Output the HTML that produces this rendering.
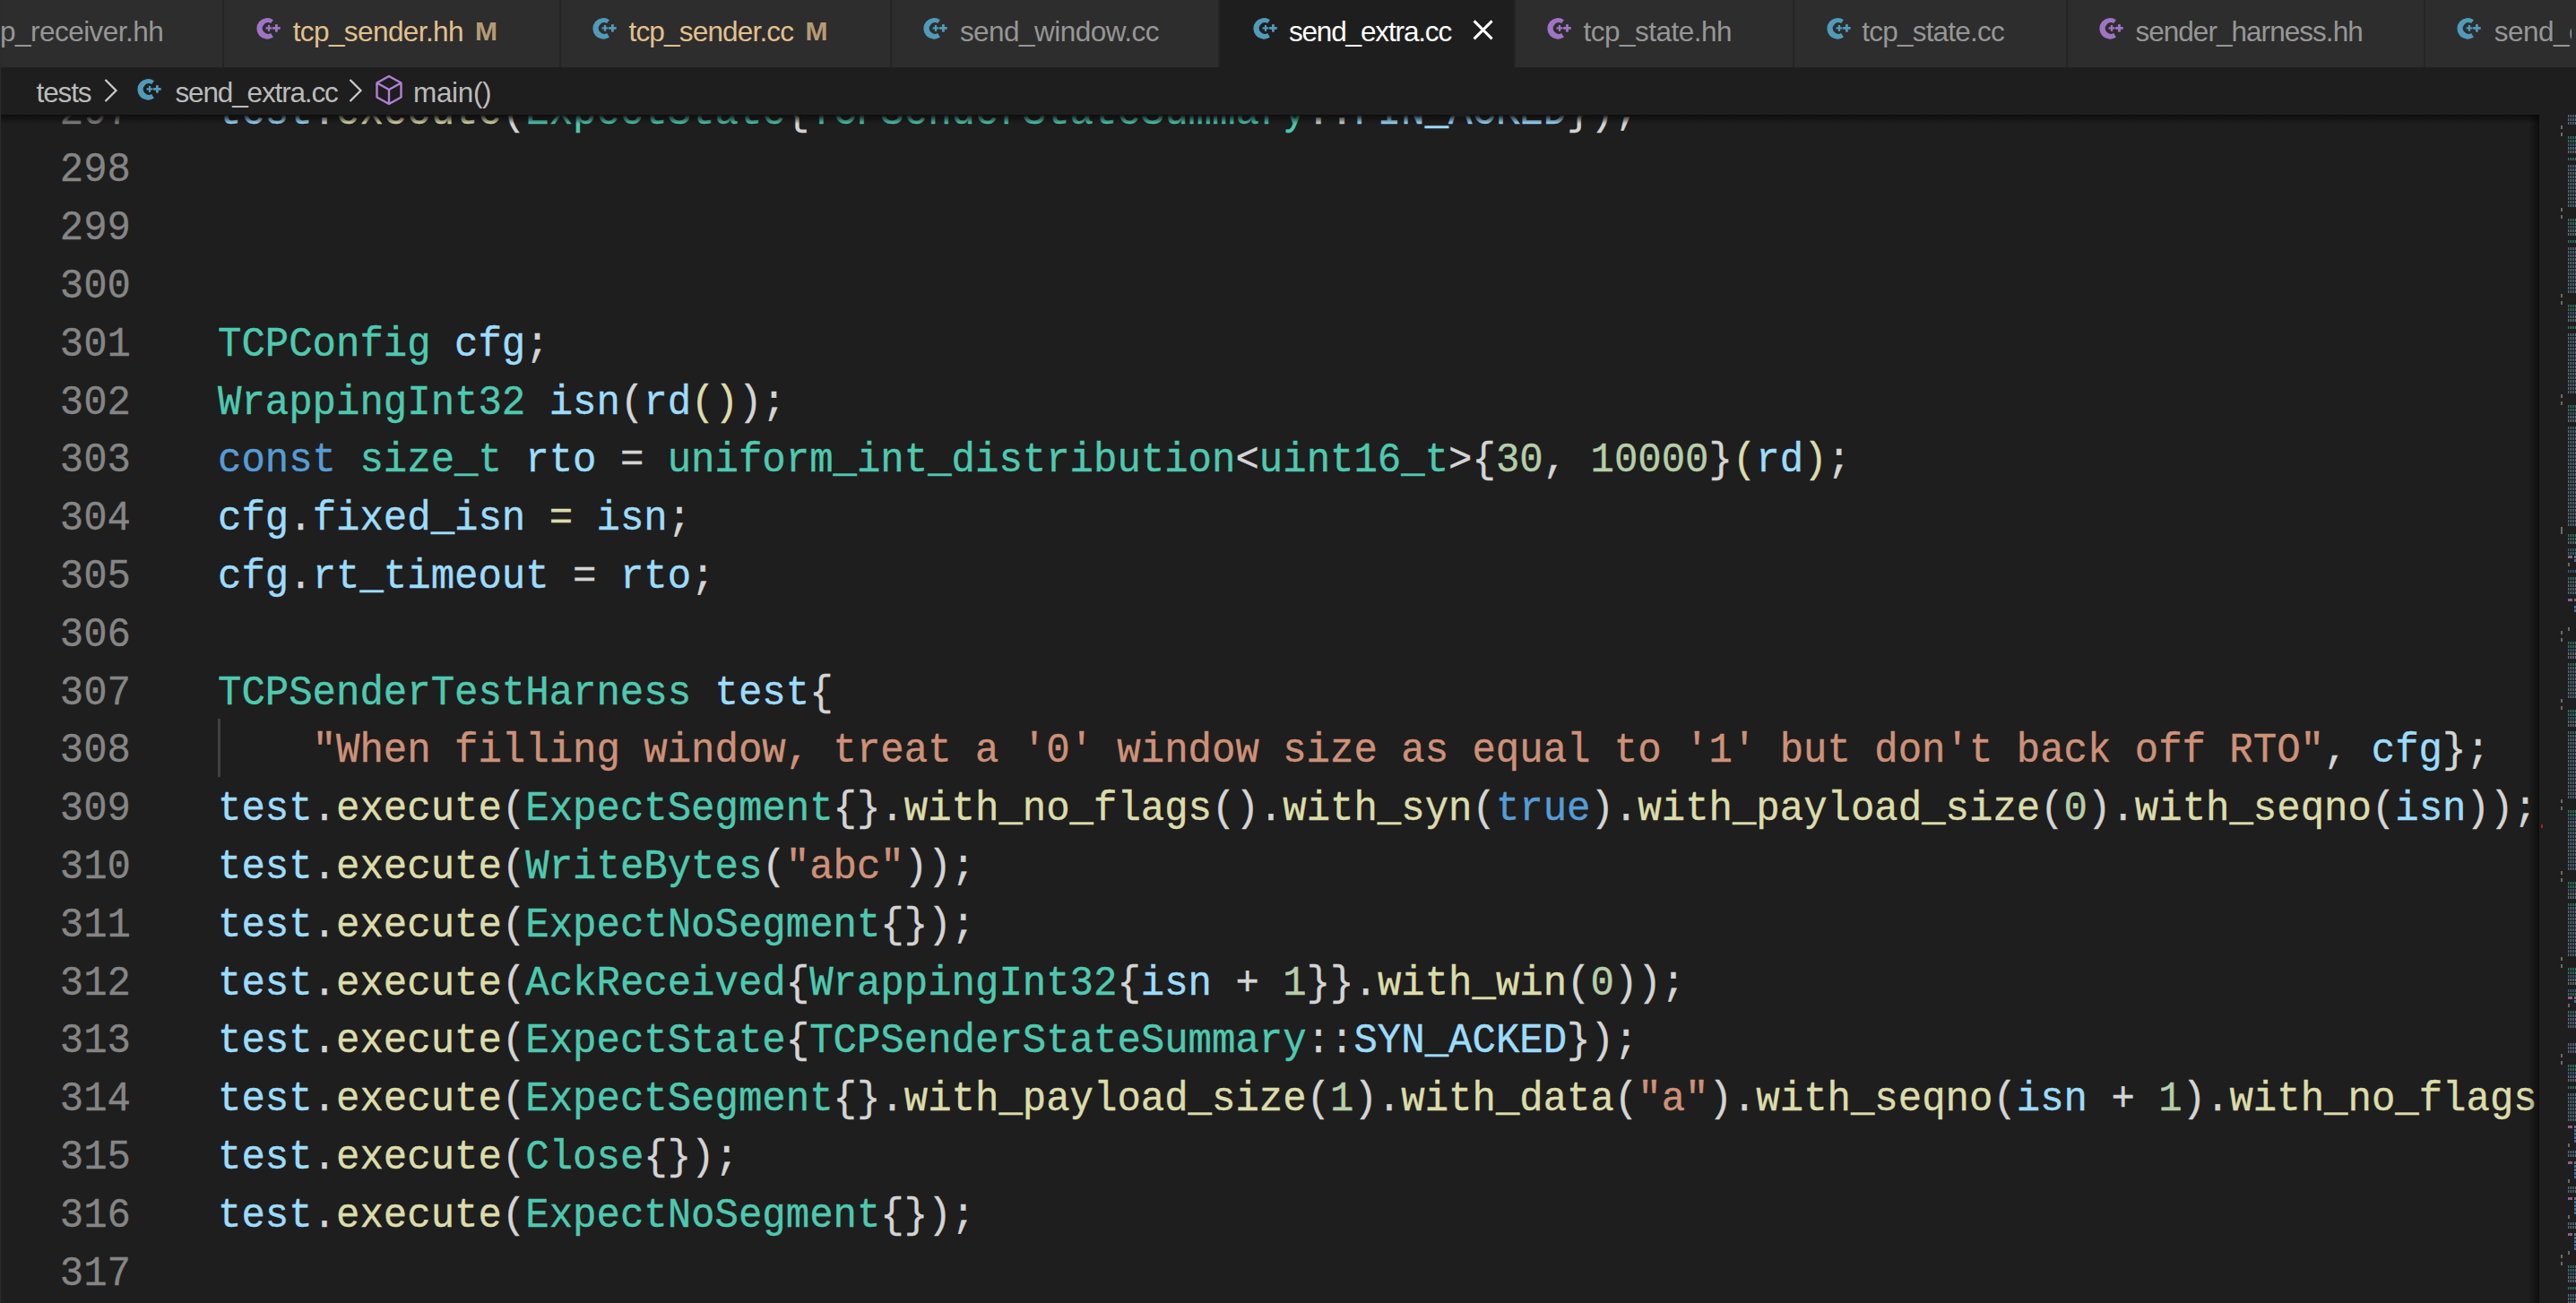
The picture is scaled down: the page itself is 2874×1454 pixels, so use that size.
<!DOCTYPE html>
<html><head><meta charset="utf-8">
<style>
html,body{margin:0;padding:0;}
body{width:2874px;height:1454px;overflow:hidden;background:#1e1e1e;position:relative;font-family:"Liberation Sans",sans-serif;}
#tabs{position:absolute;left:0;top:0;width:2874px;height:75px;background:#252526;overflow:hidden;}
.tab{position:absolute;top:0;height:75px;background:#2d2d2d;}
.tab.active{background:#1e1e1e;}
.tt{position:absolute;top:-2px;line-height:75px;height:75px;font-size:31.5px;letter-spacing:-1.15px;white-space:nowrap;color:#969696;}
.tt.mod{color:#e2c08d;}
.tt.act{color:#ffffff;}
.mm{position:absolute;top:-3.0px;line-height:75px;height:75px;font-size:30px;font-weight:bold;white-space:nowrap;color:#e2c08d;opacity:.75;}
.ico{position:absolute;width:32px;height:30px;}
#crumbs{position:absolute;left:0;top:75px;width:2874px;height:53px;background:#1e1e1e;}
.bc{position:absolute;top:1.5px;line-height:53px;height:53px;font-size:31.5px;letter-spacing:-1.15px;white-space:nowrap;color:#bbbbbb;}
#editor{position:absolute;left:0;top:128px;width:2874px;height:1326px;overflow:hidden;background:#1e1e1e;}
#code{position:absolute;left:0;top:0;width:2833px;height:1326px;overflow:hidden;}
.ln{position:absolute;left:0;width:146px;text-align:right;color:#858585;font-family:"Liberation Mono",monospace;font-size:44px;-webkit-text-stroke:0.3px currentColor;transform:scaleY(1.06);transform-origin:0 44.11px;line-height:64.8px;height:64.8px;}
.cl{position:absolute;left:243px;white-space:pre;color:#d4d4d4;font-family:"Liberation Mono",monospace;font-size:44px;-webkit-text-stroke:0.4px currentColor;transform:scaleY(1.05);transform-origin:0 44.11px;line-height:64.8px;height:64.8px;}
.v{color:#9cdcfe}.f{color:#dcdcaa}.ty{color:#4ec9b0}.k{color:#569cd6}.s{color:#ce9178}.n{color:#b5cea8}.p{color:#d4d4d4}
#shadowtop{position:absolute;left:0;top:0;width:2833px;height:10px;background:linear-gradient(#0d0d0d,rgba(0,0,0,0));}
#vshadow{position:absolute;left:2821px;top:0;width:12px;height:1326px;background:linear-gradient(90deg,rgba(0,0,0,0),rgba(0,0,0,.55));}
#minimap{position:absolute;left:2841px;top:0;width:33px;height:1326px;overflow:hidden;}
.mmk{position:absolute;height:3px;}
</style></head><body>
<svg width="0" height="0" style="position:absolute">
 <defs>
  <g id="cpp">
   <path d="M20.9 5.19 A11.8 11.8 0 1 0 20.9 24.61 L18.2 20.04 A6.2 6.4 0 1 1 18.2 8.96 Z"/>
   <rect x="12.5" y="13.3" width="7" height="2.2"/>
   <rect x="14.9" y="10.9" width="2.2" height="7"/>
   <rect x="20.15" y="13.0" width="8.5" height="2.8"/>
   <rect x="23.0" y="10.15" width="2.8" height="8.5"/>
  </g>
 </defs>
</svg>
<div id="tabs">
<div class="tab" style="left:0px;width:248px"></div>
<div class="tt" style="left:0px;letter-spacing:-0.53px">p_receiver.hh</div>
<div class="tab" style="left:250px;width:374px"></div>
<svg class="ico" style="left:284.1px;top:16.7px;fill:#a074c4" viewBox="0 0 32 30"><use href="#cpp"/></svg>
<div class="tt mod" style="left:326.7px;letter-spacing:-0.59px">tcp_sender.hh</div>
<div class="mm" style="left:529.9px">M</div>
<div class="tab" style="left:626px;width:367px"></div>
<svg class="ico" style="left:658.6px;top:16.7px;fill:#519aba" viewBox="0 0 32 30"><use href="#cpp"/></svg>
<div class="tt mod" style="left:701.5px;letter-spacing:-0.82px">tcp_sender.cc</div>
<div class="mm" style="left:898.4px">M</div>
<div class="tab" style="left:995px;width:364px"></div>
<svg class="ico" style="left:1027.6px;top:16.7px;fill:#519aba" viewBox="0 0 32 30"><use href="#cpp"/></svg>
<div class="tt " style="left:1070.9px;letter-spacing:-0.53px">send_window.cc</div>
<div class="tab active" style="left:1361px;width:328px"></div>
<svg class="ico" style="left:1395.6px;top:16.7px;fill:#519aba" viewBox="0 0 32 30"><use href="#cpp"/></svg>
<div class="tt act" style="left:1437.9px;letter-spacing:-1.15px">send_extra.cc</div>
<svg style="position:absolute;left:1641px;top:20px" width="27" height="27" viewBox="0 0 27 27"><path d="M3.6 3.4 L23.6 23.4 M23.6 3.4 L3.6 23.4" stroke="#ffffff" stroke-width="3" fill="none"/></svg>
<div class="tab" style="left:1691px;width:309px"></div>
<svg class="ico" style="left:1723.6px;top:16.7px;fill:#a074c4" viewBox="0 0 32 30"><use href="#cpp"/></svg>
<div class="tt " style="left:1766.6px;letter-spacing:-0.51px">tcp_state.hh</div>
<div class="tab" style="left:2002px;width:303px"></div>
<svg class="ico" style="left:2035.6px;top:16.7px;fill:#519aba" viewBox="0 0 32 30"><use href="#cpp"/></svg>
<div class="tt " style="left:2077.3px;letter-spacing:-0.79px">tcp_state.cc</div>
<div class="tab" style="left:2307px;width:397px"></div>
<svg class="ico" style="left:2339.6px;top:16.7px;fill:#a074c4" viewBox="0 0 32 30"><use href="#cpp"/></svg>
<div class="tt " style="left:2382.4px;letter-spacing:-0.96px">sender_harness.hh</div>
<div class="tab" style="left:2706px;width:168px"></div>
<svg class="ico" style="left:2738.6px;top:16.7px;fill:#519aba" viewBox="0 0 32 30"><use href="#cpp"/></svg>
<div class="tt " style="left:2782.8px;letter-spacing:-0.5px">send_close.cc</div>
<div style="position:absolute;left:2869px;top:0;width:5px;height:75px;background:#2d2d2d"></div>
</div>
<div id="crumbs">
<div class="bc" style="left:40.6px">tests</div>
<svg style="position:absolute;left:114px;top:11px" width="20" height="30" viewBox="0 0 20 30"><path d="M3.5 3 L15.5 15 L3.5 27" stroke="#cccccc" stroke-width="2.2" fill="none"/></svg>
<svg class="ico" style="left:151.3px;top:9.7px;fill:#519aba" viewBox="0 0 32 30"><use href="#cpp"/></svg>
<div class="bc" style="left:195.5px">send_extra.cc</div>
<svg style="position:absolute;left:387px;top:11px" width="20" height="30" viewBox="0 0 20 30"><path d="M3.5 3 L15.5 15 L3.5 27" stroke="#cccccc" stroke-width="2.2" fill="none"/></svg>
<svg style="position:absolute;left:418px;top:8px" width="32" height="36" viewBox="0 0 32 36"><path d="M16 2 L29.5 9.5 L29.5 25.5 L16 33 L2.5 25.5 L2.5 9.5 Z M2.5 9.5 L16 17 L29.5 9.5 M16 17 L16 33" stroke="#b180d7" stroke-width="2.4" fill="none" stroke-linejoin="round"/></svg>
<div class="bc" style="left:461px;letter-spacing:-0.35px">main()</div>
</div>
<div id="editor">
 <div id="code">
<div class="ln" style="top:-34.31px">297</div>
<div class="cl" style="top:-34.31px"><span class="v">test</span><span class="p">.</span><span class="f">execute</span><span class="p">(</span><span class="ty">ExpectState</span><span class="p">{</span><span class="ty">TCPSenderStateSummary</span><span class="p">::</span><span class="v">FIN_ACKED</span><span class="p">});</span></div>
<div class="ln" style="top:30.49px">298</div>
<div class="cl" style="top:30.49px"></div>
<div class="ln" style="top:95.29px">299</div>
<div class="cl" style="top:95.29px"></div>
<div class="ln" style="top:160.09px">300</div>
<div class="cl" style="top:160.09px"></div>
<div class="ln" style="top:224.89px">301</div>
<div class="cl" style="top:224.89px"><span class="ty">TCPConfig</span><span class="p"> </span><span class="v">cfg</span><span class="p">;</span></div>
<div class="ln" style="top:289.69px">302</div>
<div class="cl" style="top:289.69px"><span class="ty">WrappingInt32</span><span class="p"> </span><span class="v">isn</span><span class="p">(</span><span class="v">rd</span><span class="f">()</span><span class="p">);</span></div>
<div class="ln" style="top:354.49px">303</div>
<div class="cl" style="top:354.49px"><span class="k">const</span><span class="p"> </span><span class="ty">size_t</span><span class="p"> </span><span class="v">rto</span><span class="p"> = </span><span class="ty">uniform_int_distribution</span><span class="p">&lt;</span><span class="ty">uint16_t</span><span class="p">&gt;{</span><span class="n">30</span><span class="p">, </span><span class="n">10000</span><span class="p">}</span><span class="f">(</span><span class="v">rd</span><span class="f">)</span><span class="p">;</span></div>
<div class="ln" style="top:419.29px">304</div>
<div class="cl" style="top:419.29px"><span class="v">cfg</span><span class="p">.</span><span class="v">fixed_isn</span><span class="p"> </span><span class="f">=</span><span class="p"> </span><span class="v">isn</span><span class="p">;</span></div>
<div class="ln" style="top:484.09px">305</div>
<div class="cl" style="top:484.09px"><span class="v">cfg</span><span class="p">.</span><span class="v">rt_timeout</span><span class="p"> = </span><span class="v">rto</span><span class="p">;</span></div>
<div class="ln" style="top:548.89px">306</div>
<div class="cl" style="top:548.89px"></div>
<div class="ln" style="top:613.69px">307</div>
<div class="cl" style="top:613.69px"><span class="ty">TCPSenderTestHarness</span><span class="p"> </span><span class="v">test</span><span class="p">{</span></div>
<div class="ln" style="top:678.49px">308</div>
<div class="cl" style="top:678.49px"><span class="p">    </span><span class="s">&quot;When filling window, treat a &#x27;0&#x27; window size as equal to &#x27;1&#x27; but don&#x27;t back off RTO&quot;</span><span class="p">, </span><span class="v">cfg</span><span class="p">};</span></div>
<div class="ln" style="top:743.29px">309</div>
<div class="cl" style="top:743.29px"><span class="v">test</span><span class="p">.</span><span class="f">execute</span><span class="p">(</span><span class="ty">ExpectSegment</span><span class="p">{}.</span><span class="f">with_no_flags</span><span class="p">().</span><span class="f">with_syn</span><span class="p">(</span><span class="k">true</span><span class="p">).</span><span class="f">with_payload_size</span><span class="p">(</span><span class="n">0</span><span class="p">).</span><span class="f">with_seqno</span><span class="p">(</span><span class="v">isn</span><span class="p">));</span></div>
<div class="ln" style="top:808.09px">310</div>
<div class="cl" style="top:808.09px"><span class="v">test</span><span class="p">.</span><span class="f">execute</span><span class="p">(</span><span class="ty">WriteBytes</span><span class="p">(</span><span class="s">&quot;abc&quot;</span><span class="p">));</span></div>
<div class="ln" style="top:872.89px">311</div>
<div class="cl" style="top:872.89px"><span class="v">test</span><span class="p">.</span><span class="f">execute</span><span class="p">(</span><span class="ty">ExpectNoSegment</span><span class="p">{});</span></div>
<div class="ln" style="top:937.69px">312</div>
<div class="cl" style="top:937.69px"><span class="v">test</span><span class="p">.</span><span class="f">execute</span><span class="p">(</span><span class="ty">AckReceived</span><span class="p">{</span><span class="ty">WrappingInt32</span><span class="p">{</span><span class="v">isn</span><span class="p"> + </span><span class="n">1</span><span class="p">}}.</span><span class="f">with_win</span><span class="p">(</span><span class="n">0</span><span class="p">));</span></div>
<div class="ln" style="top:1002.49px">313</div>
<div class="cl" style="top:1002.49px"><span class="v">test</span><span class="p">.</span><span class="f">execute</span><span class="p">(</span><span class="ty">ExpectState</span><span class="p">{</span><span class="ty">TCPSenderStateSummary</span><span class="p">::</span><span class="v">SYN_ACKED</span><span class="p">});</span></div>
<div class="ln" style="top:1067.29px">314</div>
<div class="cl" style="top:1067.29px"><span class="v">test</span><span class="p">.</span><span class="f">execute</span><span class="p">(</span><span class="ty">ExpectSegment</span><span class="p">{}.</span><span class="f">with_payload_size</span><span class="p">(</span><span class="n">1</span><span class="p">).</span><span class="f">with_data</span><span class="p">(</span><span class="s">&quot;a&quot;</span><span class="p">).</span><span class="f">with_seqno</span><span class="p">(</span><span class="v">isn</span><span class="p"> + </span><span class="n">1</span><span class="p">).</span><span class="f">with_no_flags</span><span class="p">().</span><span class="f">with_fin</span><span class="p">(</span><span class="k">true</span><span class="p">));</span></div>
<div class="ln" style="top:1132.09px">315</div>
<div class="cl" style="top:1132.09px"><span class="v">test</span><span class="p">.</span><span class="f">execute</span><span class="p">(</span><span class="ty">Close</span><span class="p">{});</span></div>
<div class="ln" style="top:1196.89px">316</div>
<div class="cl" style="top:1196.89px"><span class="v">test</span><span class="p">.</span><span class="f">execute</span><span class="p">(</span><span class="ty">ExpectNoSegment</span><span class="p">{});</span></div>
<div class="ln" style="top:1261.69px">317</div>
<div class="cl" style="top:1261.69px"></div>
<div class="ln" style="top:1326.49px">318</div>
<div class="cl" style="top:1326.49px"><span class="v">test</span><span class="p">.</span><span class="f">execute</span><span class="p">(</span><span class="ty">ExpectSegment</span><span class="p">{}.</span><span class="f">with_fin</span><span class="p">(</span><span class="k">true</span><span class="p">));</span></div>
<div style="position:absolute;left:243px;top:673.80px;width:2.5px;height:64.8px;background:#404040"></div>
 </div>
 <div id="shadowtop"></div>
 <div id="vshadow"></div>
 <div id="minimap">
<div class="mmk" style="left:24px;top:0px;width:9px;background:repeating-linear-gradient(90deg,#6a8fa5 0 1.4px,rgba(30,30,30,0) 1.4px 2px);opacity:.75"></div>
<div class="mmk" style="left:24px;top:4px;width:9px;background:repeating-linear-gradient(90deg,#6a8fa5 0 1.4px,rgba(30,30,30,0) 1.4px 2px);opacity:.75"></div>
<div class="mmk" style="left:24px;top:8px;width:9px;background:repeating-linear-gradient(90deg,#6a8fa5 0 1.4px,rgba(30,30,30,0) 1.4px 2px);opacity:.75"></div>
<div class="mmk" style="left:16px;top:12px;width:2px;height:4px;background:#6a6a6a"></div>
<div class="mmk" style="left:16px;top:20px;width:2px;height:4px;background:#6a6a6a"></div>
<div class="mmk" style="left:24px;top:24px;width:9px;background:repeating-linear-gradient(90deg,#3f9a87 0 1.4px,rgba(30,30,30,0) 1.4px 2px);opacity:.75"></div>
<div class="mmk" style="left:24px;top:28px;width:9px;background:repeating-linear-gradient(90deg,#3f9a87 0 1.4px,rgba(30,30,30,0) 1.4px 2px);opacity:.75"></div>
<div class="mmk" style="left:24px;top:32px;width:9px;background:repeating-linear-gradient(90deg,#4b78a8 0 1.4px,rgba(30,30,30,0) 1.4px 2px);opacity:.75"></div>
<div class="mmk" style="left:24px;top:36px;width:9px;background:repeating-linear-gradient(90deg,#7898a8 0 1.4px,rgba(30,30,30,0) 1.4px 2px);opacity:.75"></div>
<div class="mmk" style="left:24px;top:40px;width:9px;background:repeating-linear-gradient(90deg,#7898a8 0 1.4px,rgba(30,30,30,0) 1.4px 2px);opacity:.75"></div>
<div class="mmk" style="left:24px;top:48px;width:9px;background:repeating-linear-gradient(90deg,#3f9a87 0 1.4px,rgba(30,30,30,0) 1.4px 2px);opacity:.75"></div>
<div class="mmk" style="left:24px;top:56px;width:9px;background:repeating-linear-gradient(90deg,#6a8fa5 0 1.4px,rgba(30,30,30,0) 1.4px 2px);opacity:.75"></div>
<div class="mmk" style="left:24px;top:60px;width:9px;background:repeating-linear-gradient(90deg,#6a8fa5 0 1.4px,rgba(30,30,30,0) 1.4px 2px);opacity:.75"></div>
<div class="mmk" style="left:24px;top:64px;width:9px;background:repeating-linear-gradient(90deg,#6a8fa5 0 1.4px,rgba(30,30,30,0) 1.4px 2px);opacity:.75"></div>
<div class="mmk" style="left:24px;top:68px;width:9px;background:repeating-linear-gradient(90deg,#6a8fa5 0 1.4px,rgba(30,30,30,0) 1.4px 2px);opacity:.75"></div>
<div class="mmk" style="left:24px;top:72px;width:9px;background:repeating-linear-gradient(90deg,#6a8fa5 0 1.4px,rgba(30,30,30,0) 1.4px 2px);opacity:.75"></div>
<div class="mmk" style="left:24px;top:76px;width:9px;background:repeating-linear-gradient(90deg,#6a8fa5 0 1.4px,rgba(30,30,30,0) 1.4px 2px);opacity:.75"></div>
<div class="mmk" style="left:24px;top:80px;width:9px;background:repeating-linear-gradient(90deg,#6a8fa5 0 1.4px,rgba(30,30,30,0) 1.4px 2px);opacity:.75"></div>
<div class="mmk" style="left:24px;top:84px;width:9px;background:repeating-linear-gradient(90deg,#6a8fa5 0 1.4px,rgba(30,30,30,0) 1.4px 2px);opacity:.75"></div>
<div class="mmk" style="left:24px;top:88px;width:9px;background:repeating-linear-gradient(90deg,#6a8fa5 0 1.4px,rgba(30,30,30,0) 1.4px 2px);opacity:.75"></div>
<div class="mmk" style="left:24px;top:92px;width:9px;background:repeating-linear-gradient(90deg,#6a8fa5 0 1.4px,rgba(30,30,30,0) 1.4px 2px);opacity:.75"></div>
<div class="mmk" style="left:24px;top:96px;width:9px;background:repeating-linear-gradient(90deg,#6a8fa5 0 1.4px,rgba(30,30,30,0) 1.4px 2px);opacity:.75"></div>
<div class="mmk" style="left:24px;top:100px;width:9px;background:repeating-linear-gradient(90deg,#6a8fa5 0 1.4px,rgba(30,30,30,0) 1.4px 2px);opacity:.75"></div>
<div class="mmk" style="left:16px;top:104px;width:2px;height:4px;background:#6a6a6a"></div>
<div class="mmk" style="left:16px;top:112px;width:2px;height:4px;background:#6a6a6a"></div>
<div class="mmk" style="left:24px;top:116px;width:9px;background:repeating-linear-gradient(90deg,#3f9a87 0 1.4px,rgba(30,30,30,0) 1.4px 2px);opacity:.75"></div>
<div class="mmk" style="left:24px;top:120px;width:9px;background:repeating-linear-gradient(90deg,#3f9a87 0 1.4px,rgba(30,30,30,0) 1.4px 2px);opacity:.75"></div>
<div class="mmk" style="left:24px;top:124px;width:9px;background:repeating-linear-gradient(90deg,#4b78a8 0 1.4px,rgba(30,30,30,0) 1.4px 2px);opacity:.75"></div>
<div class="mmk" style="left:24px;top:128px;width:9px;background:repeating-linear-gradient(90deg,#7898a8 0 1.4px,rgba(30,30,30,0) 1.4px 2px);opacity:.75"></div>
<div class="mmk" style="left:24px;top:132px;width:9px;background:repeating-linear-gradient(90deg,#7898a8 0 1.4px,rgba(30,30,30,0) 1.4px 2px);opacity:.75"></div>
<div class="mmk" style="left:24px;top:140px;width:9px;background:repeating-linear-gradient(90deg,#3f9a87 0 1.4px,rgba(30,30,30,0) 1.4px 2px);opacity:.75"></div>
<div class="mmk" style="left:24px;top:148px;width:9px;background:repeating-linear-gradient(90deg,#6a8fa5 0 1.4px,rgba(30,30,30,0) 1.4px 2px);opacity:.75"></div>
<div class="mmk" style="left:24px;top:152px;width:9px;background:repeating-linear-gradient(90deg,#6a8fa5 0 1.4px,rgba(30,30,30,0) 1.4px 2px);opacity:.75"></div>
<div class="mmk" style="left:24px;top:156px;width:9px;background:repeating-linear-gradient(90deg,#6a8fa5 0 1.4px,rgba(30,30,30,0) 1.4px 2px);opacity:.75"></div>
<div class="mmk" style="left:24px;top:160px;width:9px;background:repeating-linear-gradient(90deg,#6a8fa5 0 1.4px,rgba(30,30,30,0) 1.4px 2px);opacity:.75"></div>
<div class="mmk" style="left:24px;top:164px;width:9px;background:repeating-linear-gradient(90deg,#6a8fa5 0 1.4px,rgba(30,30,30,0) 1.4px 2px);opacity:.75"></div>
<div class="mmk" style="left:24px;top:168px;width:9px;background:repeating-linear-gradient(90deg,#6a8fa5 0 1.4px,rgba(30,30,30,0) 1.4px 2px);opacity:.75"></div>
<div class="mmk" style="left:24px;top:172px;width:9px;background:repeating-linear-gradient(90deg,#6a8fa5 0 1.4px,rgba(30,30,30,0) 1.4px 2px);opacity:.75"></div>
<div class="mmk" style="left:24px;top:176px;width:9px;background:repeating-linear-gradient(90deg,#6a8fa5 0 1.4px,rgba(30,30,30,0) 1.4px 2px);opacity:.75"></div>
<div class="mmk" style="left:24px;top:180px;width:9px;background:repeating-linear-gradient(90deg,#6a8fa5 0 1.4px,rgba(30,30,30,0) 1.4px 2px);opacity:.75"></div>
<div class="mmk" style="left:24px;top:184px;width:9px;background:repeating-linear-gradient(90deg,#6a8fa5 0 1.4px,rgba(30,30,30,0) 1.4px 2px);opacity:.75"></div>
<div class="mmk" style="left:24px;top:188px;width:9px;background:repeating-linear-gradient(90deg,#6a8fa5 0 1.4px,rgba(30,30,30,0) 1.4px 2px);opacity:.75"></div>
<div class="mmk" style="left:24px;top:192px;width:9px;background:repeating-linear-gradient(90deg,#6a8fa5 0 1.4px,rgba(30,30,30,0) 1.4px 2px);opacity:.75"></div>
<div class="mmk" style="left:24px;top:196px;width:9px;background:repeating-linear-gradient(90deg,#6a8fa5 0 1.4px,rgba(30,30,30,0) 1.4px 2px);opacity:.75"></div>
<div class="mmk" style="left:16px;top:200px;width:2px;height:4px;background:#6a6a6a"></div>
<div class="mmk" style="left:16px;top:208px;width:2px;height:4px;background:#6a6a6a"></div>
<div class="mmk" style="left:24px;top:212px;width:9px;background:repeating-linear-gradient(90deg,#3f9a87 0 1.4px,rgba(30,30,30,0) 1.4px 2px);opacity:.75"></div>
<div class="mmk" style="left:24px;top:216px;width:9px;background:repeating-linear-gradient(90deg,#3f9a87 0 1.4px,rgba(30,30,30,0) 1.4px 2px);opacity:.75"></div>
<div class="mmk" style="left:24px;top:220px;width:9px;background:repeating-linear-gradient(90deg,#4b78a8 0 1.4px,rgba(30,30,30,0) 1.4px 2px);opacity:.75"></div>
<div class="mmk" style="left:24px;top:224px;width:9px;background:repeating-linear-gradient(90deg,#7898a8 0 1.4px,rgba(30,30,30,0) 1.4px 2px);opacity:.75"></div>
<div class="mmk" style="left:24px;top:228px;width:9px;background:repeating-linear-gradient(90deg,#7898a8 0 1.4px,rgba(30,30,30,0) 1.4px 2px);opacity:.75"></div>
<div class="mmk" style="left:24px;top:236px;width:9px;background:repeating-linear-gradient(90deg,#3f9a87 0 1.4px,rgba(30,30,30,0) 1.4px 2px);opacity:.75"></div>
<div class="mmk" style="left:24px;top:244px;width:9px;background:repeating-linear-gradient(90deg,#6a8fa5 0 1.4px,rgba(30,30,30,0) 1.4px 2px);opacity:.75"></div>
<div class="mmk" style="left:24px;top:248px;width:9px;background:repeating-linear-gradient(90deg,#6a8fa5 0 1.4px,rgba(30,30,30,0) 1.4px 2px);opacity:.75"></div>
<div class="mmk" style="left:24px;top:252px;width:9px;background:repeating-linear-gradient(90deg,#6a8fa5 0 1.4px,rgba(30,30,30,0) 1.4px 2px);opacity:.75"></div>
<div class="mmk" style="left:24px;top:256px;width:9px;background:repeating-linear-gradient(90deg,#6a8fa5 0 1.4px,rgba(30,30,30,0) 1.4px 2px);opacity:.75"></div>
<div class="mmk" style="left:24px;top:260px;width:9px;background:repeating-linear-gradient(90deg,#6a8fa5 0 1.4px,rgba(30,30,30,0) 1.4px 2px);opacity:.75"></div>
<div class="mmk" style="left:24px;top:264px;width:9px;background:repeating-linear-gradient(90deg,#6a8fa5 0 1.4px,rgba(30,30,30,0) 1.4px 2px);opacity:.75"></div>
<div class="mmk" style="left:24px;top:268px;width:9px;background:repeating-linear-gradient(90deg,#6a8fa5 0 1.4px,rgba(30,30,30,0) 1.4px 2px);opacity:.75"></div>
<div class="mmk" style="left:24px;top:272px;width:9px;background:repeating-linear-gradient(90deg,#6a8fa5 0 1.4px,rgba(30,30,30,0) 1.4px 2px);opacity:.75"></div>
<div class="mmk" style="left:24px;top:276px;width:9px;background:repeating-linear-gradient(90deg,#6a8fa5 0 1.4px,rgba(30,30,30,0) 1.4px 2px);opacity:.75"></div>
<div class="mmk" style="left:24px;top:280px;width:9px;background:repeating-linear-gradient(90deg,#6a8fa5 0 1.4px,rgba(30,30,30,0) 1.4px 2px);opacity:.75"></div>
<div class="mmk" style="left:24px;top:284px;width:9px;background:repeating-linear-gradient(90deg,#6a8fa5 0 1.4px,rgba(30,30,30,0) 1.4px 2px);opacity:.75"></div>
<div class="mmk" style="left:24px;top:288px;width:9px;background:repeating-linear-gradient(90deg,#6a8fa5 0 1.4px,rgba(30,30,30,0) 1.4px 2px);opacity:.75"></div>
<div class="mmk" style="left:24px;top:292px;width:9px;background:repeating-linear-gradient(90deg,#6a8fa5 0 1.4px,rgba(30,30,30,0) 1.4px 2px);opacity:.75"></div>
<div class="mmk" style="left:24px;top:296px;width:9px;background:repeating-linear-gradient(90deg,#6a8fa5 0 1.4px,rgba(30,30,30,0) 1.4px 2px);opacity:.75"></div>
<div class="mmk" style="left:24px;top:300px;width:9px;background:repeating-linear-gradient(90deg,#6a8fa5 0 1.4px,rgba(30,30,30,0) 1.4px 2px);opacity:.75"></div>
<div class="mmk" style="left:24px;top:304px;width:9px;background:repeating-linear-gradient(90deg,#6a8fa5 0 1.4px,rgba(30,30,30,0) 1.4px 2px);opacity:.75"></div>
<div class="mmk" style="left:24px;top:308px;width:9px;background:repeating-linear-gradient(90deg,#6a8fa5 0 1.4px,rgba(30,30,30,0) 1.4px 2px);opacity:.75"></div>
<div class="mmk" style="left:16px;top:312px;width:2px;height:4px;background:#6a6a6a"></div>
<div class="mmk" style="left:16px;top:320px;width:2px;height:4px;background:#6a6a6a"></div>
<div class="mmk" style="left:24px;top:324px;width:9px;background:repeating-linear-gradient(90deg,#3f9a87 0 1.4px,rgba(30,30,30,0) 1.4px 2px);opacity:.75"></div>
<div class="mmk" style="left:24px;top:328px;width:9px;background:repeating-linear-gradient(90deg,#3f9a87 0 1.4px,rgba(30,30,30,0) 1.4px 2px);opacity:.75"></div>
<div class="mmk" style="left:24px;top:332px;width:9px;background:repeating-linear-gradient(90deg,#4b78a8 0 1.4px,rgba(30,30,30,0) 1.4px 2px);opacity:.75"></div>
<div class="mmk" style="left:24px;top:336px;width:9px;background:repeating-linear-gradient(90deg,#7898a8 0 1.4px,rgba(30,30,30,0) 1.4px 2px);opacity:.75"></div>
<div class="mmk" style="left:24px;top:340px;width:9px;background:repeating-linear-gradient(90deg,#7898a8 0 1.4px,rgba(30,30,30,0) 1.4px 2px);opacity:.75"></div>
<div class="mmk" style="left:24px;top:348px;width:9px;background:repeating-linear-gradient(90deg,#3f9a87 0 1.4px,rgba(30,30,30,0) 1.4px 2px);opacity:.75"></div>
<div class="mmk" style="left:24px;top:352px;width:9px;background:repeating-linear-gradient(90deg,#6a8fa5 0 1.4px,rgba(30,30,30,0) 1.4px 2px);opacity:.75"></div>
<div class="mmk" style="left:24px;top:356px;width:9px;background:repeating-linear-gradient(90deg,#6a8fa5 0 1.4px,rgba(30,30,30,0) 1.4px 2px);opacity:.75"></div>
<div class="mmk" style="left:24px;top:360px;width:9px;background:repeating-linear-gradient(90deg,#6a8fa5 0 1.4px,rgba(30,30,30,0) 1.4px 2px);opacity:.75"></div>
<div class="mmk" style="left:24px;top:364px;width:9px;background:repeating-linear-gradient(90deg,#6a8fa5 0 1.4px,rgba(30,30,30,0) 1.4px 2px);opacity:.75"></div>
<div class="mmk" style="left:24px;top:368px;width:9px;background:repeating-linear-gradient(90deg,#6a8fa5 0 1.4px,rgba(30,30,30,0) 1.4px 2px);opacity:.75"></div>
<div class="mmk" style="left:24px;top:372px;width:9px;background:repeating-linear-gradient(90deg,#6a8fa5 0 1.4px,rgba(30,30,30,0) 1.4px 2px);opacity:.75"></div>
<div class="mmk" style="left:24px;top:376px;width:9px;background:repeating-linear-gradient(90deg,#6a8fa5 0 1.4px,rgba(30,30,30,0) 1.4px 2px);opacity:.75"></div>
<div class="mmk" style="left:24px;top:380px;width:9px;background:repeating-linear-gradient(90deg,#6a8fa5 0 1.4px,rgba(30,30,30,0) 1.4px 2px);opacity:.75"></div>
<div class="mmk" style="left:24px;top:384px;width:9px;background:repeating-linear-gradient(90deg,#6a8fa5 0 1.4px,rgba(30,30,30,0) 1.4px 2px);opacity:.75"></div>
<div class="mmk" style="left:24px;top:388px;width:9px;background:repeating-linear-gradient(90deg,#6a8fa5 0 1.4px,rgba(30,30,30,0) 1.4px 2px);opacity:.75"></div>
<div class="mmk" style="left:24px;top:392px;width:9px;background:repeating-linear-gradient(90deg,#6a8fa5 0 1.4px,rgba(30,30,30,0) 1.4px 2px);opacity:.75"></div>
<div class="mmk" style="left:24px;top:396px;width:9px;background:repeating-linear-gradient(90deg,#6a8fa5 0 1.4px,rgba(30,30,30,0) 1.4px 2px);opacity:.75"></div>
<div class="mmk" style="left:24px;top:400px;width:9px;background:repeating-linear-gradient(90deg,#6a8fa5 0 1.4px,rgba(30,30,30,0) 1.4px 2px);opacity:.75"></div>
<div class="mmk" style="left:24px;top:404px;width:9px;background:repeating-linear-gradient(90deg,#6a8fa5 0 1.4px,rgba(30,30,30,0) 1.4px 2px);opacity:.75"></div>
<div class="mmk" style="left:24px;top:408px;width:9px;background:repeating-linear-gradient(90deg,#6a8fa5 0 1.4px,rgba(30,30,30,0) 1.4px 2px);opacity:.75"></div>
<div class="mmk" style="left:24px;top:412px;width:9px;background:repeating-linear-gradient(90deg,#6a8fa5 0 1.4px,rgba(30,30,30,0) 1.4px 2px);opacity:.75"></div>
<div class="mmk" style="left:24px;top:416px;width:9px;background:repeating-linear-gradient(90deg,#6a8fa5 0 1.4px,rgba(30,30,30,0) 1.4px 2px);opacity:.75"></div>
<div class="mmk" style="left:24px;top:420px;width:9px;background:repeating-linear-gradient(90deg,#6a8fa5 0 1.4px,rgba(30,30,30,0) 1.4px 2px);opacity:.75"></div>
<div class="mmk" style="left:24px;top:424px;width:9px;background:repeating-linear-gradient(90deg,#6a8fa5 0 1.4px,rgba(30,30,30,0) 1.4px 2px);opacity:.75"></div>
<div class="mmk" style="left:24px;top:428px;width:9px;background:repeating-linear-gradient(90deg,#6a8fa5 0 1.4px,rgba(30,30,30,0) 1.4px 2px);opacity:.75"></div>
<div class="mmk" style="left:24px;top:432px;width:9px;background:repeating-linear-gradient(90deg,#6a8fa5 0 1.4px,rgba(30,30,30,0) 1.4px 2px);opacity:.75"></div>
<div class="mmk" style="left:24px;top:436px;width:9px;background:repeating-linear-gradient(90deg,#6a8fa5 0 1.4px,rgba(30,30,30,0) 1.4px 2px);opacity:.75"></div>
<div class="mmk" style="left:24px;top:440px;width:9px;background:repeating-linear-gradient(90deg,#6a8fa5 0 1.4px,rgba(30,30,30,0) 1.4px 2px);opacity:.75"></div>
<div class="mmk" style="left:24px;top:444px;width:9px;background:repeating-linear-gradient(90deg,#6a8fa5 0 1.4px,rgba(30,30,30,0) 1.4px 2px);opacity:.75"></div>
<div class="mmk" style="left:24px;top:448px;width:9px;background:repeating-linear-gradient(90deg,#6a8fa5 0 1.4px,rgba(30,30,30,0) 1.4px 2px);opacity:.75"></div>
<div class="mmk" style="left:24px;top:452px;width:9px;background:repeating-linear-gradient(90deg,#6a8fa5 0 1.4px,rgba(30,30,30,0) 1.4px 2px);opacity:.75"></div>
<div class="mmk" style="left:24px;top:456px;width:9px;background:repeating-linear-gradient(90deg,#6a8fa5 0 1.4px,rgba(30,30,30,0) 1.4px 2px);opacity:.75"></div>
<div class="mmk" style="left:16px;top:460px;width:2px;height:4px;background:#6a6a6a"></div>
<div class="mmk" style="left:16px;top:464px;width:2px;height:4px;background:#6a6a6a"></div>
<div class="mmk" style="left:24px;top:468px;width:9px;background:repeating-linear-gradient(90deg,#3f9a87 0 1.4px,rgba(30,30,30,0) 1.4px 2px);opacity:.75"></div>
<div class="mmk" style="left:24px;top:472px;width:9px;background:repeating-linear-gradient(90deg,#3f9a87 0 1.4px,rgba(30,30,30,0) 1.4px 2px);opacity:.75"></div>
<div class="mmk" style="left:24px;top:476px;width:9px;background:repeating-linear-gradient(90deg,#7898a8 0 1.4px,rgba(30,30,30,0) 1.4px 2px);opacity:.75"></div>
<div class="mmk" style="left:24px;top:484px;width:9px;background:repeating-linear-gradient(90deg,#4b78a8 0 1.4px,rgba(30,30,30,0) 1.4px 2px);opacity:.75"></div>
<div class="mmk" style="left:24px;top:488px;width:9px;background:repeating-linear-gradient(90deg,#3f9a87 0 1.4px,rgba(30,30,30,0) 1.4px 2px);opacity:.75"></div>
<div class="mmk" style="left:24px;top:492px;width:5px;background:#8a5f8f"></div><div class="mmk" style="left:31px;top:492px;width:2px;background:#707070"></div>
<div class="mmk" style="left:31px;top:496px;width:2px;background:#41709a"></div>
<div class="mmk" style="left:24px;top:500px;width:2px;height:4px;background:#6a6a6a"></div>
<div class="mmk" style="left:24px;top:508px;width:9px;background:repeating-linear-gradient(90deg,#4b78a8 0 1.4px,rgba(30,30,30,0) 1.4px 2px);opacity:.75"></div>
<div class="mmk" style="left:24px;top:516px;width:9px;background:repeating-linear-gradient(90deg,#3f9a87 0 1.4px,rgba(30,30,30,0) 1.4px 2px);opacity:.75"></div>
<div class="mmk" style="left:24px;top:520px;width:9px;background:repeating-linear-gradient(90deg,#6a8fa5 0 1.4px,rgba(30,30,30,0) 1.4px 2px);opacity:.75"></div>
<div class="mmk" style="left:24px;top:524px;width:9px;background:repeating-linear-gradient(90deg,#6a8fa5 0 1.4px,rgba(30,30,30,0) 1.4px 2px);opacity:.75"></div>
<div class="mmk" style="left:24px;top:528px;width:9px;background:repeating-linear-gradient(90deg,#6a8fa5 0 1.4px,rgba(30,30,30,0) 1.4px 2px);opacity:.75"></div>
<div class="mmk" style="left:24px;top:532px;width:9px;background:repeating-linear-gradient(90deg,#6a8fa5 0 1.4px,rgba(30,30,30,0) 1.4px 2px);opacity:.75"></div>
<div class="mmk" style="left:24px;top:540px;width:5px;background:#8a5f8f"></div><div class="mmk" style="left:31px;top:540px;width:2px;background:#707070"></div>
<div class="mmk" style="left:31px;top:548px;width:2px;background:#41709a"></div>
<div class="mmk" style="left:31px;top:552px;width:2px;background:#41709a"></div>
<div class="mmk" style="left:24px;top:572px;width:2px;height:4px;background:#6a6a6a"></div>
<div class="mmk" style="left:16px;top:576px;width:2px;height:4px;background:#6a6a6a"></div>
<div class="mmk" style="left:16px;top:584px;width:2px;height:4px;background:#6a6a6a"></div>
<div class="mmk" style="left:24px;top:588px;width:9px;background:repeating-linear-gradient(90deg,#3f9a87 0 1.4px,rgba(30,30,30,0) 1.4px 2px);opacity:.75"></div>
<div class="mmk" style="left:24px;top:592px;width:9px;background:repeating-linear-gradient(90deg,#3f9a87 0 1.4px,rgba(30,30,30,0) 1.4px 2px);opacity:.75"></div>
<div class="mmk" style="left:24px;top:596px;width:9px;background:repeating-linear-gradient(90deg,#4b78a8 0 1.4px,rgba(30,30,30,0) 1.4px 2px);opacity:.75"></div>
<div class="mmk" style="left:24px;top:600px;width:9px;background:repeating-linear-gradient(90deg,#7898a8 0 1.4px,rgba(30,30,30,0) 1.4px 2px);opacity:.75"></div>
<div class="mmk" style="left:24px;top:604px;width:9px;background:repeating-linear-gradient(90deg,#7898a8 0 1.4px,rgba(30,30,30,0) 1.4px 2px);opacity:.75"></div>
<div class="mmk" style="left:24px;top:612px;width:9px;background:repeating-linear-gradient(90deg,#3f9a87 0 1.4px,rgba(30,30,30,0) 1.4px 2px);opacity:.75"></div>
<div class="mmk" style="left:24px;top:616px;width:9px;background:repeating-linear-gradient(90deg,#6a8fa5 0 1.4px,rgba(30,30,30,0) 1.4px 2px);opacity:.75"></div>
<div class="mmk" style="left:24px;top:620px;width:9px;background:repeating-linear-gradient(90deg,#6a8fa5 0 1.4px,rgba(30,30,30,0) 1.4px 2px);opacity:.75"></div>
<div class="mmk" style="left:24px;top:624px;width:9px;background:repeating-linear-gradient(90deg,#6a8fa5 0 1.4px,rgba(30,30,30,0) 1.4px 2px);opacity:.75"></div>
<div class="mmk" style="left:24px;top:628px;width:9px;background:repeating-linear-gradient(90deg,#6a8fa5 0 1.4px,rgba(30,30,30,0) 1.4px 2px);opacity:.75"></div>
<div class="mmk" style="left:24px;top:632px;width:9px;background:repeating-linear-gradient(90deg,#6a8fa5 0 1.4px,rgba(30,30,30,0) 1.4px 2px);opacity:.75"></div>
<div class="mmk" style="left:24px;top:636px;width:9px;background:repeating-linear-gradient(90deg,#6a8fa5 0 1.4px,rgba(30,30,30,0) 1.4px 2px);opacity:.75"></div>
<div class="mmk" style="left:24px;top:640px;width:9px;background:repeating-linear-gradient(90deg,#6a8fa5 0 1.4px,rgba(30,30,30,0) 1.4px 2px);opacity:.75"></div>
<div class="mmk" style="left:24px;top:644px;width:9px;background:repeating-linear-gradient(90deg,#6a8fa5 0 1.4px,rgba(30,30,30,0) 1.4px 2px);opacity:.75"></div>
<div class="mmk" style="left:24px;top:648px;width:9px;background:repeating-linear-gradient(90deg,#6a8fa5 0 1.4px,rgba(30,30,30,0) 1.4px 2px);opacity:.75"></div>
<div class="mmk" style="left:16px;top:652px;width:2px;height:4px;background:#6a6a6a"></div>
<div class="mmk" style="left:16px;top:660px;width:2px;height:4px;background:#6a6a6a"></div>
<div class="mmk" style="left:24px;top:664px;width:9px;background:repeating-linear-gradient(90deg,#3f9a87 0 1.4px,rgba(30,30,30,0) 1.4px 2px);opacity:.75"></div>
<div class="mmk" style="left:24px;top:668px;width:9px;background:repeating-linear-gradient(90deg,#3f9a87 0 1.4px,rgba(30,30,30,0) 1.4px 2px);opacity:.75"></div>
<div class="mmk" style="left:24px;top:672px;width:9px;background:repeating-linear-gradient(90deg,#4b78a8 0 1.4px,rgba(30,30,30,0) 1.4px 2px);opacity:.75"></div>
<div class="mmk" style="left:24px;top:676px;width:9px;background:repeating-linear-gradient(90deg,#7898a8 0 1.4px,rgba(30,30,30,0) 1.4px 2px);opacity:.75"></div>
<div class="mmk" style="left:24px;top:680px;width:9px;background:repeating-linear-gradient(90deg,#7898a8 0 1.4px,rgba(30,30,30,0) 1.4px 2px);opacity:.75"></div>
<div class="mmk" style="left:24px;top:688px;width:9px;background:repeating-linear-gradient(90deg,#3f9a87 0 1.4px,rgba(30,30,30,0) 1.4px 2px);opacity:.75"></div>
<div class="mmk" style="left:24px;top:692px;width:9px;background:repeating-linear-gradient(90deg,#6a8fa5 0 1.4px,rgba(30,30,30,0) 1.4px 2px);opacity:.75"></div>
<div class="mmk" style="left:24px;top:696px;width:9px;background:repeating-linear-gradient(90deg,#6a8fa5 0 1.4px,rgba(30,30,30,0) 1.4px 2px);opacity:.75"></div>
<div class="mmk" style="left:24px;top:700px;width:9px;background:repeating-linear-gradient(90deg,#6a8fa5 0 1.4px,rgba(30,30,30,0) 1.4px 2px);opacity:.75"></div>
<div class="mmk" style="left:24px;top:704px;width:9px;background:repeating-linear-gradient(90deg,#6a8fa5 0 1.4px,rgba(30,30,30,0) 1.4px 2px);opacity:.75"></div>
<div class="mmk" style="left:24px;top:708px;width:9px;background:repeating-linear-gradient(90deg,#6a8fa5 0 1.4px,rgba(30,30,30,0) 1.4px 2px);opacity:.75"></div>
<div class="mmk" style="left:24px;top:712px;width:9px;background:repeating-linear-gradient(90deg,#6a8fa5 0 1.4px,rgba(30,30,30,0) 1.4px 2px);opacity:.75"></div>
<div class="mmk" style="left:24px;top:716px;width:9px;background:repeating-linear-gradient(90deg,#6a8fa5 0 1.4px,rgba(30,30,30,0) 1.4px 2px);opacity:.75"></div>
<div class="mmk" style="left:24px;top:720px;width:9px;background:repeating-linear-gradient(90deg,#6a8fa5 0 1.4px,rgba(30,30,30,0) 1.4px 2px);opacity:.75"></div>
<div class="mmk" style="left:24px;top:724px;width:9px;background:repeating-linear-gradient(90deg,#6a8fa5 0 1.4px,rgba(30,30,30,0) 1.4px 2px);opacity:.75"></div>
<div class="mmk" style="left:24px;top:728px;width:9px;background:repeating-linear-gradient(90deg,#6a8fa5 0 1.4px,rgba(30,30,30,0) 1.4px 2px);opacity:.75"></div>
<div class="mmk" style="left:24px;top:732px;width:9px;background:repeating-linear-gradient(90deg,#6a8fa5 0 1.4px,rgba(30,30,30,0) 1.4px 2px);opacity:.75"></div>
<div class="mmk" style="left:24px;top:736px;width:9px;background:repeating-linear-gradient(90deg,#6a8fa5 0 1.4px,rgba(30,30,30,0) 1.4px 2px);opacity:.75"></div>
<div class="mmk" style="left:24px;top:740px;width:9px;background:repeating-linear-gradient(90deg,#6a8fa5 0 1.4px,rgba(30,30,30,0) 1.4px 2px);opacity:.75"></div>
<div class="mmk" style="left:24px;top:744px;width:9px;background:repeating-linear-gradient(90deg,#6a8fa5 0 1.4px,rgba(30,30,30,0) 1.4px 2px);opacity:.75"></div>
<div class="mmk" style="left:24px;top:748px;width:9px;background:repeating-linear-gradient(90deg,#6a8fa5 0 1.4px,rgba(30,30,30,0) 1.4px 2px);opacity:.75"></div>
<div class="mmk" style="left:24px;top:752px;width:9px;background:repeating-linear-gradient(90deg,#6a8fa5 0 1.4px,rgba(30,30,30,0) 1.4px 2px);opacity:.75"></div>
<div class="mmk" style="left:24px;top:756px;width:9px;background:repeating-linear-gradient(90deg,#6a8fa5 0 1.4px,rgba(30,30,30,0) 1.4px 2px);opacity:.75"></div>
<div class="mmk" style="left:24px;top:760px;width:9px;background:repeating-linear-gradient(90deg,#6a8fa5 0 1.4px,rgba(30,30,30,0) 1.4px 2px);opacity:.75"></div>
<div class="mmk" style="left:16px;top:764px;width:2px;height:4px;background:#6a6a6a"></div>
<div class="mmk" style="left:16px;top:772px;width:2px;height:4px;background:#6a6a6a"></div>
<div class="mmk" style="left:24px;top:776px;width:9px;background:repeating-linear-gradient(90deg,#3f9a87 0 1.4px,rgba(30,30,30,0) 1.4px 2px);opacity:.75"></div>
<div class="mmk" style="left:24px;top:780px;width:9px;background:repeating-linear-gradient(90deg,#3f9a87 0 1.4px,rgba(30,30,30,0) 1.4px 2px);opacity:.75"></div>
<div class="mmk" style="left:24px;top:784px;width:9px;background:repeating-linear-gradient(90deg,#4b78a8 0 1.4px,rgba(30,30,30,0) 1.4px 2px);opacity:.75"></div>
<div class="mmk" style="left:24px;top:788px;width:9px;background:repeating-linear-gradient(90deg,#7898a8 0 1.4px,rgba(30,30,30,0) 1.4px 2px);opacity:.75"></div>
<div class="mmk" style="left:24px;top:792px;width:9px;background:repeating-linear-gradient(90deg,#7898a8 0 1.4px,rgba(30,30,30,0) 1.4px 2px);opacity:.75"></div>
<div class="mmk" style="left:24px;top:796px;width:9px;background:repeating-linear-gradient(90deg,#3f9a87 0 1.4px,rgba(30,30,30,0) 1.4px 2px);opacity:.75"></div>
<div class="mmk" style="left:24px;top:800px;width:9px;background:repeating-linear-gradient(90deg,#6a8fa5 0 1.4px,rgba(30,30,30,0) 1.4px 2px);opacity:.75"></div>
<div class="mmk" style="left:24px;top:804px;width:9px;background:repeating-linear-gradient(90deg,#6a8fa5 0 1.4px,rgba(30,30,30,0) 1.4px 2px);opacity:.75"></div>
<div class="mmk" style="left:24px;top:808px;width:9px;background:repeating-linear-gradient(90deg,#6a8fa5 0 1.4px,rgba(30,30,30,0) 1.4px 2px);opacity:.75"></div>
<div class="mmk" style="left:24px;top:812px;width:9px;background:repeating-linear-gradient(90deg,#6a8fa5 0 1.4px,rgba(30,30,30,0) 1.4px 2px);opacity:.75"></div>
<div class="mmk" style="left:24px;top:816px;width:9px;background:repeating-linear-gradient(90deg,#6a8fa5 0 1.4px,rgba(30,30,30,0) 1.4px 2px);opacity:.75"></div>
<div class="mmk" style="left:24px;top:820px;width:9px;background:repeating-linear-gradient(90deg,#6a8fa5 0 1.4px,rgba(30,30,30,0) 1.4px 2px);opacity:.75"></div>
<div class="mmk" style="left:24px;top:824px;width:9px;background:repeating-linear-gradient(90deg,#6a8fa5 0 1.4px,rgba(30,30,30,0) 1.4px 2px);opacity:.75"></div>
<div class="mmk" style="left:24px;top:828px;width:9px;background:repeating-linear-gradient(90deg,#6a8fa5 0 1.4px,rgba(30,30,30,0) 1.4px 2px);opacity:.75"></div>
<div class="mmk" style="left:24px;top:832px;width:9px;background:repeating-linear-gradient(90deg,#6a8fa5 0 1.4px,rgba(30,30,30,0) 1.4px 2px);opacity:.75"></div>
<div class="mmk" style="left:24px;top:836px;width:9px;background:repeating-linear-gradient(90deg,#6a8fa5 0 1.4px,rgba(30,30,30,0) 1.4px 2px);opacity:.75"></div>
<div class="mmk" style="left:24px;top:840px;width:9px;background:repeating-linear-gradient(90deg,#6a8fa5 0 1.4px,rgba(30,30,30,0) 1.4px 2px);opacity:.75"></div>
<div class="mmk" style="left:16px;top:844px;width:2px;height:4px;background:#6a6a6a"></div>
<div class="mmk" style="left:16px;top:852px;width:2px;height:4px;background:#6a6a6a"></div>
<div class="mmk" style="left:24px;top:856px;width:9px;background:repeating-linear-gradient(90deg,#3f9a87 0 1.4px,rgba(30,30,30,0) 1.4px 2px);opacity:.75"></div>
<div class="mmk" style="left:24px;top:860px;width:9px;background:repeating-linear-gradient(90deg,#3f9a87 0 1.4px,rgba(30,30,30,0) 1.4px 2px);opacity:.75"></div>
<div class="mmk" style="left:24px;top:864px;width:9px;background:repeating-linear-gradient(90deg,#4b78a8 0 1.4px,rgba(30,30,30,0) 1.4px 2px);opacity:.75"></div>
<div class="mmk" style="left:24px;top:868px;width:9px;background:repeating-linear-gradient(90deg,#7898a8 0 1.4px,rgba(30,30,30,0) 1.4px 2px);opacity:.75"></div>
<div class="mmk" style="left:24px;top:872px;width:9px;background:repeating-linear-gradient(90deg,#7898a8 0 1.4px,rgba(30,30,30,0) 1.4px 2px);opacity:.75"></div>
<div class="mmk" style="left:24px;top:880px;width:9px;background:repeating-linear-gradient(90deg,#3f9a87 0 1.4px,rgba(30,30,30,0) 1.4px 2px);opacity:.75"></div>
<div class="mmk" style="left:24px;top:884px;width:9px;background:repeating-linear-gradient(90deg,#6a8fa5 0 1.4px,rgba(30,30,30,0) 1.4px 2px);opacity:.75"></div>
<div class="mmk" style="left:24px;top:888px;width:9px;background:repeating-linear-gradient(90deg,#6a8fa5 0 1.4px,rgba(30,30,30,0) 1.4px 2px);opacity:.75"></div>
<div class="mmk" style="left:24px;top:892px;width:9px;background:repeating-linear-gradient(90deg,#6a8fa5 0 1.4px,rgba(30,30,30,0) 1.4px 2px);opacity:.75"></div>
<div class="mmk" style="left:24px;top:896px;width:9px;background:repeating-linear-gradient(90deg,#6a8fa5 0 1.4px,rgba(30,30,30,0) 1.4px 2px);opacity:.75"></div>
<div class="mmk" style="left:24px;top:900px;width:9px;background:repeating-linear-gradient(90deg,#6a8fa5 0 1.4px,rgba(30,30,30,0) 1.4px 2px);opacity:.75"></div>
<div class="mmk" style="left:24px;top:904px;width:9px;background:repeating-linear-gradient(90deg,#6a8fa5 0 1.4px,rgba(30,30,30,0) 1.4px 2px);opacity:.75"></div>
<div class="mmk" style="left:24px;top:908px;width:9px;background:repeating-linear-gradient(90deg,#6a8fa5 0 1.4px,rgba(30,30,30,0) 1.4px 2px);opacity:.75"></div>
<div class="mmk" style="left:24px;top:912px;width:9px;background:repeating-linear-gradient(90deg,#6a8fa5 0 1.4px,rgba(30,30,30,0) 1.4px 2px);opacity:.75"></div>
<div class="mmk" style="left:24px;top:916px;width:9px;background:repeating-linear-gradient(90deg,#6a8fa5 0 1.4px,rgba(30,30,30,0) 1.4px 2px);opacity:.75"></div>
<div class="mmk" style="left:24px;top:920px;width:9px;background:repeating-linear-gradient(90deg,#6a8fa5 0 1.4px,rgba(30,30,30,0) 1.4px 2px);opacity:.75"></div>
<div class="mmk" style="left:24px;top:924px;width:9px;background:repeating-linear-gradient(90deg,#6a8fa5 0 1.4px,rgba(30,30,30,0) 1.4px 2px);opacity:.75"></div>
<div class="mmk" style="left:24px;top:928px;width:9px;background:repeating-linear-gradient(90deg,#6a8fa5 0 1.4px,rgba(30,30,30,0) 1.4px 2px);opacity:.75"></div>
<div class="mmk" style="left:24px;top:932px;width:9px;background:repeating-linear-gradient(90deg,#6a8fa5 0 1.4px,rgba(30,30,30,0) 1.4px 2px);opacity:.75"></div>
<div class="mmk" style="left:24px;top:936px;width:9px;background:repeating-linear-gradient(90deg,#6a8fa5 0 1.4px,rgba(30,30,30,0) 1.4px 2px);opacity:.75"></div>
<div class="mmk" style="left:16px;top:940px;width:2px;height:4px;background:#6a6a6a"></div>
<div class="mmk" style="left:16px;top:948px;width:2px;height:4px;background:#6a6a6a"></div>
<div class="mmk" style="left:24px;top:952px;width:9px;background:repeating-linear-gradient(90deg,#3f9a87 0 1.4px,rgba(30,30,30,0) 1.4px 2px);opacity:.75"></div>
<div class="mmk" style="left:24px;top:956px;width:9px;background:repeating-linear-gradient(90deg,#3f9a87 0 1.4px,rgba(30,30,30,0) 1.4px 2px);opacity:.75"></div>
<div class="mmk" style="left:24px;top:960px;width:9px;background:repeating-linear-gradient(90deg,#4b78a8 0 1.4px,rgba(30,30,30,0) 1.4px 2px);opacity:.75"></div>
<div class="mmk" style="left:24px;top:964px;width:9px;background:repeating-linear-gradient(90deg,#7898a8 0 1.4px,rgba(30,30,30,0) 1.4px 2px);opacity:.75"></div>
<div class="mmk" style="left:24px;top:968px;width:9px;background:repeating-linear-gradient(90deg,#7898a8 0 1.4px,rgba(30,30,30,0) 1.4px 2px);opacity:.75"></div>
<div class="mmk" style="left:24px;top:976px;width:9px;background:repeating-linear-gradient(90deg,#4b78a8 0 1.4px,rgba(30,30,30,0) 1.4px 2px);opacity:.75"></div>
<div class="mmk" style="left:24px;top:980px;width:9px;background:repeating-linear-gradient(90deg,#3f9a87 0 1.4px,rgba(30,30,30,0) 1.4px 2px);opacity:.75"></div>
<div class="mmk" style="left:24px;top:984px;width:5px;background:#8a5f8f"></div><div class="mmk" style="left:31px;top:984px;width:2px;background:#707070"></div>
<div class="mmk" style="left:31px;top:988px;width:2px;background:#41709a"></div>
<div class="mmk" style="left:24px;top:992px;width:2px;height:4px;background:#6a6a6a"></div>
<div class="mmk" style="left:24px;top:1000px;width:9px;background:repeating-linear-gradient(90deg,#3f9a87 0 1.4px,rgba(30,30,30,0) 1.4px 2px);opacity:.75"></div>
<div class="mmk" style="left:24px;top:1004px;width:9px;background:repeating-linear-gradient(90deg,#6a8fa5 0 1.4px,rgba(30,30,30,0) 1.4px 2px);opacity:.75"></div>
<div class="mmk" style="left:24px;top:1008px;width:9px;background:repeating-linear-gradient(90deg,#6a8fa5 0 1.4px,rgba(30,30,30,0) 1.4px 2px);opacity:.75"></div>
<div class="mmk" style="left:24px;top:1012px;width:9px;background:repeating-linear-gradient(90deg,#6a8fa5 0 1.4px,rgba(30,30,30,0) 1.4px 2px);opacity:.75"></div>
<div class="mmk" style="left:24px;top:1016px;width:9px;background:repeating-linear-gradient(90deg,#6a8fa5 0 1.4px,rgba(30,30,30,0) 1.4px 2px);opacity:.75"></div>
<div class="mmk" style="left:24px;top:1036px;width:9px;background:repeating-linear-gradient(90deg,#6a8fa5 0 1.4px,rgba(30,30,30,0) 1.4px 2px);opacity:.75"></div>
<div class="mmk" style="left:24px;top:1040px;width:9px;background:repeating-linear-gradient(90deg,#6a8fa5 0 1.4px,rgba(30,30,30,0) 1.4px 2px);opacity:.75"></div>
<div class="mmk" style="left:24px;top:1044px;width:9px;background:repeating-linear-gradient(90deg,#6a8fa5 0 1.4px,rgba(30,30,30,0) 1.4px 2px);opacity:.75"></div>
<div class="mmk" style="left:16px;top:1048px;width:2px;height:4px;background:#6a6a6a"></div>
<div class="mmk" style="left:16px;top:1056px;width:2px;height:4px;background:#6a6a6a"></div>
<div class="mmk" style="left:24px;top:1060px;width:9px;background:repeating-linear-gradient(90deg,#3f9a87 0 1.4px,rgba(30,30,30,0) 1.4px 2px);opacity:.75"></div>
<div class="mmk" style="left:24px;top:1064px;width:9px;background:repeating-linear-gradient(90deg,#3f9a87 0 1.4px,rgba(30,30,30,0) 1.4px 2px);opacity:.75"></div>
<div class="mmk" style="left:24px;top:1068px;width:9px;background:repeating-linear-gradient(90deg,#4b78a8 0 1.4px,rgba(30,30,30,0) 1.4px 2px);opacity:.75"></div>
<div class="mmk" style="left:24px;top:1072px;width:9px;background:repeating-linear-gradient(90deg,#7898a8 0 1.4px,rgba(30,30,30,0) 1.4px 2px);opacity:.75"></div>
<div class="mmk" style="left:24px;top:1076px;width:9px;background:repeating-linear-gradient(90deg,#7898a8 0 1.4px,rgba(30,30,30,0) 1.4px 2px);opacity:.75"></div>
<div class="mmk" style="left:24px;top:1084px;width:9px;background:repeating-linear-gradient(90deg,#3f9a87 0 1.4px,rgba(30,30,30,0) 1.4px 2px);opacity:.75"></div>
<div class="mmk" style="left:24px;top:1092px;width:9px;background:repeating-linear-gradient(90deg,#6a8fa5 0 1.4px,rgba(30,30,30,0) 1.4px 2px);opacity:.75"></div>
<div class="mmk" style="left:24px;top:1096px;width:9px;background:repeating-linear-gradient(90deg,#6a8fa5 0 1.4px,rgba(30,30,30,0) 1.4px 2px);opacity:.75"></div>
<div class="mmk" style="left:24px;top:1100px;width:9px;background:repeating-linear-gradient(90deg,#6a8fa5 0 1.4px,rgba(30,30,30,0) 1.4px 2px);opacity:.75"></div>
<div class="mmk" style="left:24px;top:1104px;width:9px;background:repeating-linear-gradient(90deg,#6a8fa5 0 1.4px,rgba(30,30,30,0) 1.4px 2px);opacity:.75"></div>
<div class="mmk" style="left:24px;top:1108px;width:9px;background:repeating-linear-gradient(90deg,#6a8fa5 0 1.4px,rgba(30,30,30,0) 1.4px 2px);opacity:.75"></div>
<div class="mmk" style="left:24px;top:1112px;width:9px;background:repeating-linear-gradient(90deg,#6a8fa5 0 1.4px,rgba(30,30,30,0) 1.4px 2px);opacity:.75"></div>
<div class="mmk" style="left:24px;top:1116px;width:9px;background:repeating-linear-gradient(90deg,#6a8fa5 0 1.4px,rgba(30,30,30,0) 1.4px 2px);opacity:.75"></div>
<div class="mmk" style="left:24px;top:1120px;width:9px;background:repeating-linear-gradient(90deg,#6a8fa5 0 1.4px,rgba(30,30,30,0) 1.4px 2px);opacity:.75"></div>
<div class="mmk" style="left:24px;top:1128px;width:5px;background:#8a5f8f"></div><div class="mmk" style="left:31px;top:1128px;width:2px;background:#707070"></div>
<div class="mmk" style="left:31px;top:1132px;width:2px;background:#41709a"></div>
<div class="mmk" style="left:31px;top:1136px;width:2px;background:#41709a"></div>
<div class="mmk" style="left:31px;top:1140px;width:2px;background:#41709a"></div>
<div class="mmk" style="left:31px;top:1144px;width:2px;background:#41709a"></div>
<div class="mmk" style="left:24px;top:1148px;width:2px;height:4px;background:#6a6a6a"></div>
<div class="mmk" style="left:24px;top:1156px;width:9px;background:repeating-linear-gradient(90deg,#6a8fa5 0 1.4px,rgba(30,30,30,0) 1.4px 2px);opacity:.75"></div>
<div class="mmk" style="left:24px;top:1160px;width:9px;background:repeating-linear-gradient(90deg,#6a8fa5 0 1.4px,rgba(30,30,30,0) 1.4px 2px);opacity:.75"></div>
<div class="mmk" style="left:24px;top:1168px;width:5px;background:#8a5f8f"></div><div class="mmk" style="left:31px;top:1168px;width:2px;background:#707070"></div>
<div class="mmk" style="left:31px;top:1172px;width:2px;background:#41709a"></div>
<div class="mmk" style="left:31px;top:1176px;width:2px;background:#41709a"></div>
<div class="mmk" style="left:31px;top:1180px;width:2px;background:#41709a"></div>
<div class="mmk" style="left:31px;top:1184px;width:2px;background:#41709a"></div>
<div class="mmk" style="left:24px;top:1188px;width:2px;height:4px;background:#6a6a6a"></div>
<div class="mmk" style="left:24px;top:1196px;width:9px;background:repeating-linear-gradient(90deg,#6a8fa5 0 1.4px,rgba(30,30,30,0) 1.4px 2px);opacity:.75"></div>
<div class="mmk" style="left:24px;top:1200px;width:9px;background:repeating-linear-gradient(90deg,#6a8fa5 0 1.4px,rgba(30,30,30,0) 1.4px 2px);opacity:.75"></div>
<div class="mmk" style="left:24px;top:1208px;width:5px;background:#8a5f8f"></div><div class="mmk" style="left:31px;top:1208px;width:2px;background:#707070"></div>
<div class="mmk" style="left:31px;top:1212px;width:2px;background:#41709a"></div>
<div class="mmk" style="left:31px;top:1216px;width:2px;background:#41709a"></div>
<div class="mmk" style="left:31px;top:1220px;width:2px;background:#41709a"></div>
<div class="mmk" style="left:31px;top:1224px;width:2px;background:#41709a"></div>
<div class="mmk" style="left:24px;top:1228px;width:2px;height:4px;background:#6a6a6a"></div>
<div class="mmk" style="left:24px;top:1236px;width:9px;background:repeating-linear-gradient(90deg,#6a8fa5 0 1.4px,rgba(30,30,30,0) 1.4px 2px);opacity:.75"></div>
<div class="mmk" style="left:24px;top:1240px;width:9px;background:repeating-linear-gradient(90deg,#6a8fa5 0 1.4px,rgba(30,30,30,0) 1.4px 2px);opacity:.75"></div>
<div class="mmk" style="left:24px;top:1248px;width:5px;background:#8a5f8f"></div><div class="mmk" style="left:31px;top:1248px;width:2px;background:#707070"></div>
<div class="mmk" style="left:31px;top:1252px;width:2px;background:#41709a"></div>
<div class="mmk" style="left:31px;top:1256px;width:2px;background:#41709a"></div>
<div class="mmk" style="left:31px;top:1260px;width:2px;background:#41709a"></div>
<div class="mmk" style="left:31px;top:1264px;width:2px;background:#41709a"></div>
<div class="mmk" style="left:24px;top:1268px;width:2px;height:4px;background:#6a6a6a"></div>
<div class="mmk" style="left:16px;top:1272px;width:2px;height:4px;background:#6a6a6a"></div>
<div class="mmk" style="left:16px;top:1280px;width:2px;height:4px;background:#6a6a6a"></div>
<div class="mmk" style="left:24px;top:1284px;width:9px;background:repeating-linear-gradient(90deg,#3f9a87 0 1.4px,rgba(30,30,30,0) 1.4px 2px);opacity:.75"></div>
<div class="mmk" style="left:24px;top:1288px;width:9px;background:repeating-linear-gradient(90deg,#3f9a87 0 1.4px,rgba(30,30,30,0) 1.4px 2px);opacity:.75"></div>
<div class="mmk" style="left:24px;top:1292px;width:9px;background:repeating-linear-gradient(90deg,#4b78a8 0 1.4px,rgba(30,30,30,0) 1.4px 2px);opacity:.75"></div>
<div class="mmk" style="left:24px;top:1296px;width:9px;background:repeating-linear-gradient(90deg,#7898a8 0 1.4px,rgba(30,30,30,0) 1.4px 2px);opacity:.75"></div>
<div class="mmk" style="left:24px;top:1300px;width:9px;background:repeating-linear-gradient(90deg,#7898a8 0 1.4px,rgba(30,30,30,0) 1.4px 2px);opacity:.75"></div>
<div class="mmk" style="left:24px;top:1308px;width:9px;background:repeating-linear-gradient(90deg,#3f9a87 0 1.4px,rgba(30,30,30,0) 1.4px 2px);opacity:.75"></div>
<div class="mmk" style="left:24px;top:1316px;width:9px;background:repeating-linear-gradient(90deg,#6a8fa5 0 1.4px,rgba(30,30,30,0) 1.4px 2px);opacity:.75"></div>
<div class="mmk" style="left:24px;top:1320px;width:9px;background:repeating-linear-gradient(90deg,#6a8fa5 0 1.4px,rgba(30,30,30,0) 1.4px 2px);opacity:.75"></div>
<div class="mmk" style="left:24px;top:1324px;width:9px;background:repeating-linear-gradient(90deg,#6a8fa5 0 1.4px,rgba(30,30,30,0) 1.4px 2px);opacity:.75"></div>
 </div>
</div>
<div id="lborder" style="position:absolute;left:0;top:0;width:1px;height:1454px;background:#2b2b2b"></div>
<div id="redmk" style="position:absolute;left:2835px;top:920px;width:2px;height:4px;background:#b31d1d"></div>
</body></html>
